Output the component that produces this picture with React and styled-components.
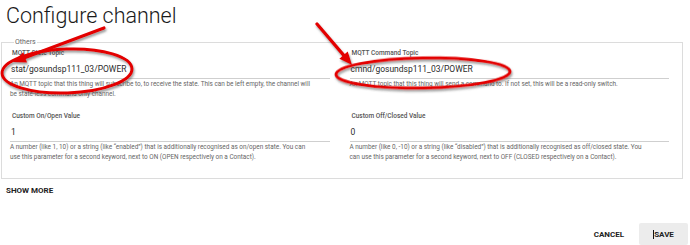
import * as React from "react";
import styled, { createGlobalStyle } from "styled-components";

const GlobalStyle = createGlobalStyle`
  html, body {
    margin: 0;
    padding: 0;
    background: #fff;
  }
  body {
    font-family: Roboto, "Liberation Sans", sans-serif;
  }
`;

const Page = styled.main`
  position: relative;
  width: 690px;
  height: 245px;
  overflow: hidden;
  background: #fff;
`;

const Title = styled.h1`
  margin: 0 0 0 6px;
  font-size: 21.5px;
  font-weight: 300;
  line-height: 31px;
  color: #1a1a1a;
`;

const Group = styled.fieldset`
  margin: 6px 7px 0 1px;
  padding: 2px 13px 16px 8px;
  border: 1px solid #dcdcdc;
  min-width: 0;
`;

const Legend = styled.legend`
  margin-left: 4px;
  padding: 0 1px;
  font-size: 7px;
  line-height: 10px;
  color: #666;
`;

const Rows = styled.div`
  display: grid;
  grid-template-columns: 1fr 1fr;
  column-gap: 20px;
  row-gap: 13px;
`;

const Field = styled.div`
  display: flex;
  flex-direction: column;
`;

const Label = styled.label`
  font-size: 6.5px;
  font-weight: 500;
  line-height: 8px;
  color: #555;
  padding-left: 2px;
`;

const Value = styled.div`
  margin-top: 6px;
  padding: 0 0 3px 1px;
  font-size: 8.5px;
  line-height: 12px;
  color: #2a2a2a;
  border-bottom: 1px solid #cfcfcf;
`;

const Help = styled.div`
  font-size: 6.4px;
  line-height: 10px;
  color: #666;
  white-space: nowrap;
`;

const ShowMore = styled.button`
  display: block;
  margin: 7px 0 0 6px;
  padding: 0;
  border: 0;
  background: none;
  font-family: inherit;
  font-size: 8px;
  font-weight: 700;
  line-height: 10px;
  color: #222;
`;

const Footer = styled.div`
  display: flex;
  justify-content: flex-end;
  align-items: center;
  gap: 15px;
  margin: 27px 2px 0 0;
`;

const FlatButton = styled.button`
  height: 22px;
  padding: 0 ${(p) => (p.$filled ? "14px" : "0")};
  min-width: ${(p) => (p.$filled ? "49px" : "0")};
  border: 0;
  border-radius: 2px;
  background: ${(p) => (p.$filled ? "#ececec" : "transparent")};
  font-family: inherit;
  font-size: 8px;
  font-weight: 700;
  color: #222;
  display: inline-flex;
  align-items: center;
  justify-content: center;
`;

const Caret = styled.span`
  display: inline-block;
  width: 1px;
  height: 9px;
  background: #111;
`;

const Overlay = styled.svg`
  position: absolute;
  left: 0;
  top: 0;
  pointer-events: none;
`;

const fields = [
  {
    label: "MQTT State Topic",
    value: "stat/gosundsp111_03/POWER",
    help: [
      "An MQTT topic that this thing will subscribe to, to receive the state. This can be left empty, the channel will",
      "be state-less command-only channel.",
    ],
  },
  {
    label: "MQTT Command Topic",
    value: "cmnd/gosundsp111_03/POWER",
    help: [
      "An MQTT topic that this thing will send a command to. If not set, this will be a read-only switch.",
    ],
  },
  {
    label: "Custom On/Open Value",
    value: "1",
    help: [
      "A number (like 1, 10) or a string (like \u201Cenabled\u201D) that is additionally recognised as on/open state. You can",
      "use this parameter for a second keyword, next to ON (OPEN respectively on a Contact).",
    ],
  },
  {
    label: "Custom Off/Closed Value",
    value: "0",
    help: [
      "A number (like 0, -10) or a string (like \u201Cdisabled\u201D) that is additionally recognised as off/closed state. You",
      "can use this parameter for a second keyword, next to OFF (CLOSED respectively on a Contact).",
    ],
  },
];

// arrow from tail to tip with a filled head
const Arrow = ({ x1, y1, x2, y2 }) => {
  const dx = x2 - x1;
  const dy = y2 - y1;
  const len = Math.hypot(dx, dy);
  const ux = dx / len;
  const uy = dy / len;
  const bx = x2 - ux * 13;
  const by = y2 - uy * 13;
  const px = -uy * 5.5;
  const py = ux * 5.5;
  return (
    <g>
      <line x1={x1} y1={y1} x2={bx + ux * 2} y2={by + uy * 2} stroke="#e30000" strokeWidth="3.2" strokeLinecap="round" />
      <polygon points={`${x2},${y2} ${bx + px},${by + py} ${bx - px},${by - py}`} fill="#e30000" />
    </g>
  );
};

const Annotations = () => (
  <Overlay width="690" height="245" viewBox="0 0 690 245">
    <defs>
      <filter id="shade" x="-20%" y="-40%" width="140%" height="180%">
        <feDropShadow dx="1" dy="2" stdDeviation="1.3" floodColor="#444" floodOpacity="0.55" />
      </filter>
    </defs>
    <g filter="url(#shade)">
      <ellipse cx="67" cy="71" rx="65" ry="22" transform="rotate(-2 67 71)" fill="none" stroke="#e30000" strokeWidth="3" />
      <ellipse cx="423" cy="73" rx="87" ry="15" transform="rotate(-1 423 73)" fill="none" stroke="#e30000" strokeWidth="3" />
      <Arrow x1={104} y1={28} x2={13} y2={62} />
      <Arrow x1={317} y1={24} x2={352} y2={65} />
    </g>
  </Overlay>
);

export default function App() {
  return (
    <Page>
      <GlobalStyle />
      <Title>Configure channel</Title>
      <Group>
        <Legend>Others</Legend>
        <Rows>
          {fields.map((f) => (
            <Field key={f.label}>
              <Label>{f.label}</Label>
              <Value>{f.value}</Value>
              <Help>
                {f.help.map((line) => (
                  <div key={line}>{line}</div>
                ))}
              </Help>
            </Field>
          ))}
        </Rows>
      </Group>
      <ShowMore>SHOW MORE</ShowMore>
      <Footer>
        <FlatButton>CANCEL</FlatButton>
        <FlatButton $filled>
          <Caret />
          SAVE
        </FlatButton>
      </Footer>
      <Annotations />
    </Page>
  );
}
